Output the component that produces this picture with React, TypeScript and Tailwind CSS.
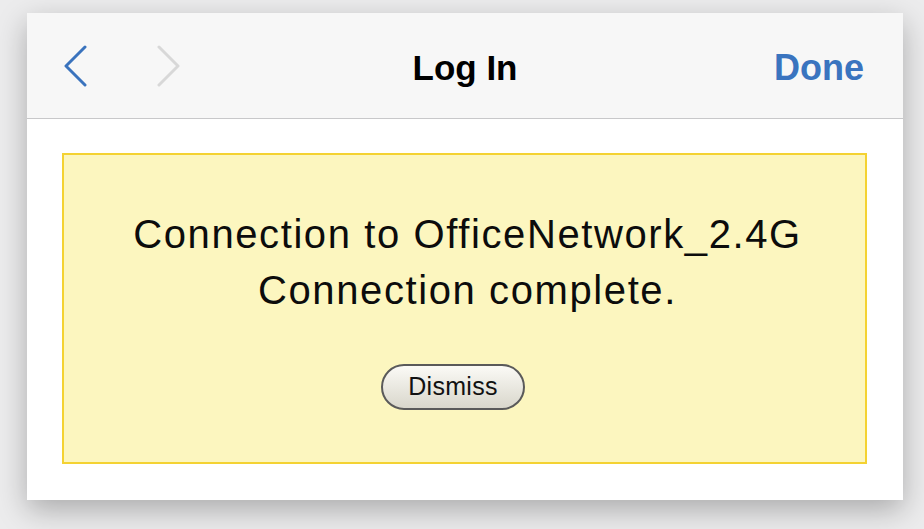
import React from 'react';

const font = { fontFamily: '"Liberation Sans", Arial, sans-serif' };

const Chevron: React.FC<{ dir: 'left' | 'right'; color: string }> = ({ dir, color }) => (
  <svg width="23" height="42" viewBox="0 0 23 42" fill="none">
    <polyline
      points={dir === 'left' ? '21,2 2,21 21,40' : '2,2 21,21 2,40'}
      stroke={color}
      strokeWidth="3"
      strokeLinecap="round"
      strokeLinejoin="round"
    />
  </svg>
);

function App() {
  return (
    <div className="w-[924px] h-[529px] bg-[#ececed] pt-[13px] pl-[27px] overflow-hidden" style={font}>
      <div className="w-[876px] h-[487px] bg-white flex flex-col shadow-[0_10px_28px_rgba(0,0,0,0.28)]">
        {/* Barre de navigation */}
        <div className="h-[106px] bg-[#f7f7f7] border-b border-[#c8c8ca] grid grid-cols-[1fr_auto_1fr] items-center">
          <div className="flex items-center gap-[70px] pl-[37px]">
            <Chevron dir="left" color="#3a73bd" />
            <Chevron dir="right" color="#d8d8d8" />
          </div>
          <div className="mt-[5px] text-[35px] font-bold text-black">Log In</div>
          <div className="mt-[5px] flex justify-end pr-[39px]">
            <span className="text-[36px] font-bold text-[#3a74bf]">Done</span>
          </div>
        </div>

        {/* Contenu */}
        <div className="flex-1 pt-[34px] pl-[35px] pr-[36px] pb-[36px]">
          <div className="h-full border-2 border-[#f4d232] bg-[#fcf6bf] flex flex-col items-center pt-[51px]">
            <p className="text-[40px] leading-[56px] tracking-[1.6px] text-[#0c0c0c] text-center pl-[6px]">
              Connection to OfficeNetwork_2.4G
              <br />
              Connection complete.
            </p>
            <div className="mt-[46px] pr-[23px]">
              <button className="w-[144px] h-[46px] rounded-full border-2 border-[#5a5a5a] bg-gradient-to-b from-[#fbfaf6] to-[#d9d7cc] text-[25px] tracking-[0.3px] text-[#111] flex items-center justify-center">
                Dismiss
              </button>
            </div>
          </div>
        </div>
      </div>
    </div>
  );
}

export default App;
